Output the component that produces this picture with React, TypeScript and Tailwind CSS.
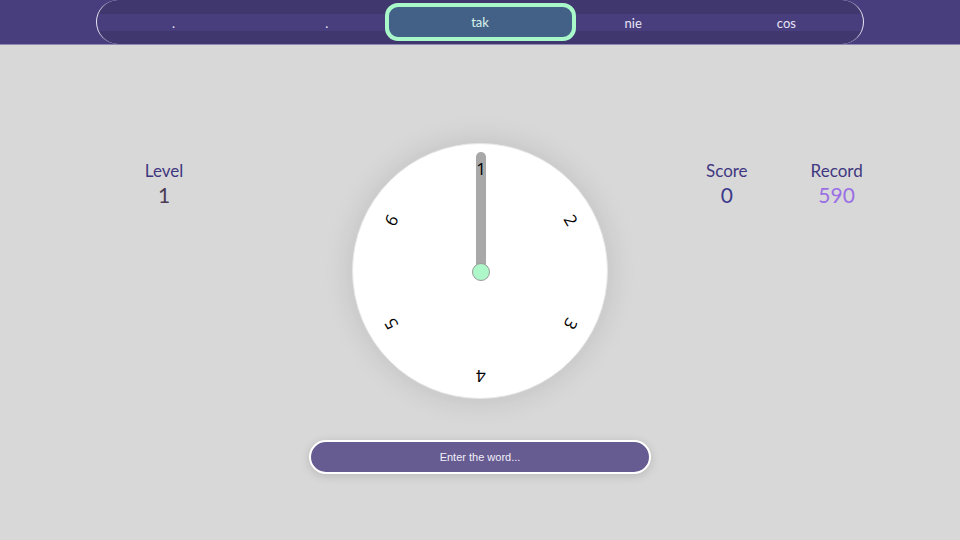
import React from "react";

const navItems = [".", ".", "tak", "nie", "cos"];
const activeIndex = 2;

const dialNumbers = [1, 2, 3, 4, 5, 6];

const Stat: React.FC<{ label: string; value: string; valueClass: string }> = ({
  label,
  value,
  valueClass,
}) => (
  <div className="flex flex-col items-center leading-none">
    <span className="text-[17px] text-[#3f3780]">{label}</span>
    <span className={`mt-[5px] text-[21px] ${valueClass}`}>{value}</span>
  </div>
);

const Dial: React.FC = () => (
  <div className="relative w-[256px] h-[256px] rounded-full bg-white shadow-[0_0_30px_rgba(0,0,0,0.12)] border border-[#e6e6e6]">
    {dialNumbers.map((n, i) => {
      const angle = i * 60;
      const rad = (angle * Math.PI) / 180;
      const r = 104;
      const x = 128 + r * Math.sin(rad);
      const y = 128 - r * Math.cos(rad);
      return (
        <span
          key={n}
          className="absolute z-10 text-[17px] leading-none text-black font-['Open_Sans',sans-serif]"
          style={{
            left: x,
            top: y,
            transform: `translate(-50%, -50%) rotate(${angle}deg)`,
          }}
        >
          {n}
        </span>
      );
    })}
    {/* hand */}
    <div className="absolute left-[123px] top-[8px] w-[10px] h-[122px] rounded-full bg-[#a8a8a8]" />
    <div className="absolute left-[119px] top-[119px] w-[18px] h-[18px] rounded-full bg-[#adf7c9] border border-[#9a9a9a]" />
  </div>
);

export default function App() {
  return (
    <div className="w-[960px] h-[540px] bg-[#d8d8d8] flex flex-col font-['Lato','Noto_Sans',sans-serif] overflow-hidden">
      <header className="h-[45px] bg-[#483d7d] border-b border-[#8f89b3] flex justify-center">
        <nav className="w-[768px] h-[44px] rounded-[22px] border-x border-[#e8e6f2] bg-[linear-gradient(to_bottom,#41376f_0,#41376f_14px,#483e7e_14px,#483e7e_31px,#41376f_31px)] grid grid-cols-5">
          {navItems.map((item, i) => (
            <div key={i} className="min-w-0 flex items-center justify-center">
              {i === activeIndex ? (
                <div className="w-[191px] h-[38px] shrink-0 rounded-[13px] border-[4px] border-[#a9f8c9] bg-[#436186] flex items-center justify-center pt-[2px] text-[13px] text-[#d9f4ee]">
                  {item}
                </div>
              ) : (
                <span className="pt-[4px] text-[13px] text-[#e6e4f5]">{item}</span>
              )}
            </div>
          ))}
        </nav>
      </header>

      <main className="flex-1 flex flex-col items-center">
        <div className="w-full mt-[98px] flex items-start">
          <div className="w-[328px] flex justify-center pt-[19px]">
            <Stat label="Level" value="1" valueClass="text-[#4a3c55]" />
          </div>
          <div className="w-[304px] flex justify-center">
            <Dial />
          </div>
          <div className="flex gap-[63px] pt-[19px] pl-[74px]">
            <Stat label="Score" value="0" valueClass="text-[#3c3a8c]" />
            <Stat label="Record" value="590" valueClass="text-[#9a6fe4]" />
          </div>
        </div>

        <input
          placeholder="Enter the word..."
          className="mt-[41px] w-[342px] h-[34px] rounded-full bg-[#665c91] border-2 border-white shadow-[0_2px_10px_rgba(0,0,0,0.15)] text-center text-[11px] text-white placeholder:text-[#f2f0fa] font-['Liberation_Sans',Arial,sans-serif] outline-none"
        />
      </main>
    </div>
  );
}
